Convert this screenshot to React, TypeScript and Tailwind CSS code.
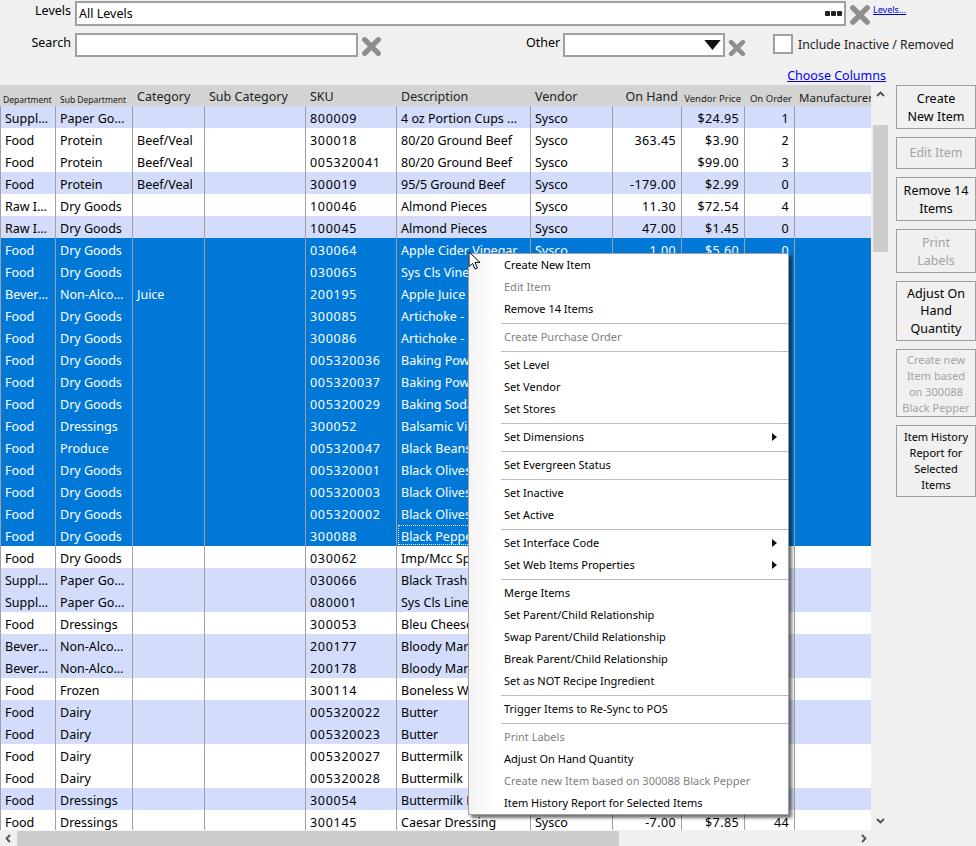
const rows: string[][] = [
  ["Supplies", "Paper Goods", "", "", "800009", "4 oz Portion Cups ...", "Sysco", "", "$24.95", "1"],
  ["Food", "Protein", "Beef/Veal", "", "300018", "80/20 Ground Beef", "Sysco", "363.45", "$3.90", "2"],
  ["Food", "Protein", "Beef/Veal", "", "005320041", "80/20 Ground Beef", "Sysco", "", "$99.00", "3"],
  ["Food", "Protein", "Beef/Veal", "", "300019", "95/5 Ground Beef", "Sysco", "-179.00", "$2.99", "0"],
  ["Raw Ingredients", "Dry Goods", "", "", "100046", "Almond Pieces", "Sysco", "11.30", "$72.54", "4"],
  ["Raw Ingredients", "Dry Goods", "", "", "100045", "Almond Pieces", "Sysco", "47.00", "$1.45", "0"],
  ["Food", "Dry Goods", "", "", "030064", "Apple Cider Vinegar", "Sysco", "1.00", "$5.60", "0"],
  ["Food", "Dry Goods", "", "", "030065", "Sys Cls Vinegar", "Sysco", "", "", ""],
  ["Beverages", "Non-Alcoholic", "Juice", "", "200195", "Apple Juice", "Sysco", "", "", ""],
  ["Food", "Dry Goods", "", "", "300085", "Artichoke - Hearts", "Sysco", "", "", ""],
  ["Food", "Dry Goods", "", "", "300086", "Artichoke - Quarters", "Sysco", "", "", ""],
  ["Food", "Dry Goods", "", "", "005320036", "Baking Powder", "Sysco", "", "", ""],
  ["Food", "Dry Goods", "", "", "005320037", "Baking Powder", "Sysco", "", "", ""],
  ["Food", "Dry Goods", "", "", "005320029", "Baking Soda", "Sysco", "", "", ""],
  ["Food", "Dressings", "", "", "300052", "Balsamic Vinegar", "Sysco", "", "", ""],
  ["Food", "Produce", "", "", "005320047", "Black Beans", "Sysco", "", "", ""],
  ["Food", "Dry Goods", "", "", "005320001", "Black Olives", "Sysco", "", "", ""],
  ["Food", "Dry Goods", "", "", "005320003", "Black Olives", "Sysco", "", "", ""],
  ["Food", "Dry Goods", "", "", "005320002", "Black Olives", "Sysco", "", "", ""],
  ["Food", "Dry Goods", "", "", "300088", "Black Pepper", "Sysco", "", "", ""],
  ["Food", "Dry Goods", "", "", "030062", "Imp/Mcc Spice", "Sysco", "", "", ""],
  ["Supplies", "Paper Goods", "", "", "030066", "Black Trash Bags", "Sysco", "", "", ""],
  ["Supplies", "Paper Goods", "", "", "080001", "Sys Cls Liners", "Sysco", "", "", ""],
  ["Food", "Dressings", "", "", "300053", "Bleu Cheese", "Sysco", "", "", ""],
  ["Beverages", "Non-Alcoholic", "", "", "200177", "Bloody Mary Mix", "Sysco", "", "", ""],
  ["Beverages", "Non-Alcoholic", "", "", "200178", "Bloody Mary Mix", "Sysco", "", "", ""],
  ["Food", "Frozen", "", "", "300114", "Boneless Wings", "Sysco", "", "", ""],
  ["Food", "Dairy", "", "", "005320022", "Butter", "Sysco", "", "", ""],
  ["Food", "Dairy", "", "", "005320023", "Butter", "Sysco", "", "", ""],
  ["Food", "Dairy", "", "", "005320027", "Buttermilk", "Sysco", "", "", ""],
  ["Food", "Dairy", "", "", "005320028", "Buttermilk", "Sysco", "", "", ""],
  ["Food", "Dressings", "", "", "300054", "Buttermilk Ranch", "Sysco", "", "", ""],
  ["Food", "Dressings", "", "", "300145", "Caesar Dressing", "Sysco", "-7.00", "$7.85", "44"],
];

const stripes = [0, 3, 5, 21, 22, 24, 25, 27, 28, 31];

const columns = [
  "w-[56px] border-l border-r pl-1 pr-1",
  "w-[77px] border-r pl-1 pr-0.5",
  "w-[72px] border-r pl-1 pr-1",
  "w-[101px] border-r pl-1 pr-1",
  "w-[91px] border-r pl-1 pr-1 tracking-[0.7px]",
  "w-[134px] border-r pl-1 pr-1",
  "w-[82px] border-r pl-1 pr-1",
  "w-[69px] border-r pr-[5px] text-right tracking-[0.4px]",
  "w-[63px] border-r pr-[5px] text-right tracking-[0.4px]",
  "w-[50px] border-r pr-[5px] text-right tracking-[0.4px]",
];

const menu: (string | null | { t: string; off?: boolean; sub?: boolean })[] = [
  "Create New Item",
  { t: "Edit Item", off: true },
  "Remove 14 Items",
  null,
  { t: "Create Purchase Order", off: true },
  null,
  "Set Level",
  "Set Vendor",
  "Set Stores",
  null,
  { t: "Set Dimensions", sub: true },
  null,
  "Set Evergreen Status",
  null,
  "Set Inactive",
  "Set Active",
  null,
  { t: "Set Interface Code", sub: true },
  { t: "Set Web Items Properties", sub: true },
  null,
  "Merge Items",
  "Set Parent/Child Relationship",
  "Swap Parent/Child Relationship",
  "Break Parent/Child Relationship",
  "Set as NOT Recipe Ingredient",
  null,
  "Trigger Items to Re-Sync to POS",
  null,
  { t: "Print Labels", off: true },
  "Adjust On Hand Quantity",
  { t: "Create new Item based on 300088 Black Pepper", off: true },
  "Item History Report for Selected Items",
];

const buttons = [
  { lines: ["Create", "New Item"], h: "h-[44px] pt-0.5 text-[12.5px] leading-[18px]" },
  { lines: ["Edit Item"], h: "h-[32px] text-[12.5px] leading-[18px] text-[#a3a3a3]" },
  { lines: ["Remove 14", "Items"], h: "h-[44px] pt-0.5 text-[12.5px] leading-[18px]" },
  { lines: ["Print", "Labels"], h: "h-[44px] pt-0.5 text-[12.5px] leading-[18px] text-[#a3a3a3]" },
  { lines: ["Adjust On", "Hand", "Quantity"], h: "h-[60px] text-[12.5px] leading-[17.5px]" },
  { lines: ["Create new", "Item based", "on 300088", "Black Pepper"], h: "h-[68px] pt-0.5 text-[11px] leading-[16px] text-[#a3a3a3]" },
  { lines: ["Item History", "Report for", "Selected", "Items"], h: "h-[72px] text-[11px] leading-[16px]" },
];

function XIcon({ size }: { size: number }) {
  return (
    <svg width={size} height={size} viewBox="0 0 20 20" className="shrink-0">
      <path d="M3.5 3.5 L16.5 16.5 M16.5 3.5 L3.5 16.5" stroke="#8e8e8e" strokeWidth="5" strokeLinecap="round" />
    </svg>
  );
}

function Chevron({ d }: { d: string }) {
  return (
    <svg width="9" height="9" viewBox="0 0 9 9" fill="none">
      <path d={d} stroke="#505050" strokeWidth="1.8" />
    </svg>
  );
}

function Row({ cells, index }: { cells: string[]; index: number }) {
  const selected = index >= 6 && index <= 19;
  const bg = selected
    ? "bg-[#0078d7] text-white"
    : stripes.includes(index)
      ? "bg-[#d3ddfb] text-black"
      : "bg-white text-black";
  return (
    <div className={`flex h-[22px] shrink-0 leading-[25px] ${bg}`}>
      {columns.map((col, i) => (
        <div key={i} className={`${col} h-[22px] shrink-0 truncate border-[#a0a0a0] ${index === 19 && i === 5 ? "outline-1 outline-dotted outline-white -outline-offset-2" : ""}`}>
          {cells[i]}
        </div>
      ))}
    </div>
  );
}

export default function App() {
  return (
    <div className="relative flex h-[846px] w-[976px] flex-col overflow-hidden bg-[#f0f0f0] font-['Noto_Sans',sans-serif] text-[12.5px] text-black">
      {/* Filters */}
      <div className="h-[85px] shrink-0">
        <div className="flex h-[33px] pt-px">
          <div className="mt-px w-[71px] text-right leading-[18px]">Levels</div>
          <div className="ml-1 flex h-[25px] w-[771px] items-center justify-between border-2 border-[#a0a0a0] bg-white pl-0.5 pr-0.5">
            <span className="pt-0.5">All Levels</span>
            <span className="flex gap-px">
              <i className="size-[5px] rounded-[1px] bg-[#222]" />
              <i className="size-[5px] rounded-[1px] bg-[#222]" />
              <i className="size-[5px] rounded-[1px] bg-[#222]" />
            </span>
          </div>
          <div className="ml-[3px] mt-[3px]"><XIcon size={22} /></div>
          <a className="ml-0.5 mt-[3px] h-3 text-[9px] leading-3 text-[#0000ee] underline">Levels...</a>
        </div>
        <div className="flex h-[24px]">
          <div className="mt-px w-[71px] text-right leading-[18px]">Search</div>
          <div className="ml-1 h-[24px] w-[283px] border-2 border-[#a0a0a0] bg-white" />
          <div className="ml-[3px] mt-[3px]"><XIcon size={21} /></div>
          <div className="ml-[144px] mt-px w-[34px] leading-[18px]">Other</div>
          <div className="ml-[3px] flex h-[24px] w-[162px] items-center justify-end border-2 border-[#a0a0a0] bg-white pr-0.5">
            <svg width="17" height="10" viewBox="0 0 18 11"><path d="M0 0 H18 L9 11 Z" fill="#111" /></svg>
          </div>
          <div className="ml-[3px] mt-[6px]"><XIcon size={18} /></div>
          <div className="ml-[27px] mt-px size-[20px] border-2 border-[#a0a0a0] bg-white" />
          <div className="ml-[5px] mt-[3px] text-[12.25px] leading-[18px] text-[#222]">Include Inactive / Removed</div>
        </div>
        <div className="mt-[10px] w-[886px] text-right leading-[18px]">
          <a className="text-[#0000ee] underline">Choose Columns</a>
        </div>
      </div>

      {/* Grid, scrollbars and action buttons */}
      <div className="flex h-[761px]">
        <div className="flex w-[871px] shrink-0 flex-col">
          <div className="h-[745px] overflow-hidden">
            <div className="flex h-[21px] items-center whitespace-nowrap bg-[#d3d3d3] pt-[3px] text-[#222]">
              <div className="w-[56px] shrink-0 pl-[3px] pt-[7px] text-[8.5px]">Department</div>
              <div className="w-[77px] shrink-0 pl-1 pt-1.5 text-[8.5px]">Sub Department</div>
              <div className="w-[72px] shrink-0 pl-1">Category</div>
              <div className="w-[101px] shrink-0 pl-1">Sub Category</div>
              <div className="w-[91px] shrink-0 pl-1">SKU</div>
              <div className="w-[134px] shrink-0 pl-1">Description</div>
              <div className="w-[82px] shrink-0 pl-1">Vendor</div>
              <div className="w-[69px] shrink-0 pr-1 text-right">On Hand</div>
              <div className="w-[63px] shrink-0 pr-1 pt-[5px] text-right text-[9.5px]">Vendor Price</div>
              <div className="w-[50px] shrink-0 pr-[3px] pt-[5px] text-right text-[9.5px]">On Order</div>
              <div className="w-[76px] shrink-0 overflow-hidden pl-1 pt-px text-[11.5px]">Manufacturer</div>
            </div>
            {rows.map((cells, i) => (
              <Row key={i} cells={cells} index={i} />
            ))}
          </div>
          <div className="flex h-[16px] items-center">
            <div className="flex w-[17px] shrink-0 justify-center"><Chevron d="M6 1 L2.5 4.5 L6 8" /></div>
            <div className="h-[15px] w-[602px] bg-[#cdcdcd]" />
            <div className="flex flex-1 justify-end pr-[3px]"><Chevron d="M3 1 L6.5 4.5 L3 8" /></div>
          </div>
        </div>

        <div className="flex h-[745px] w-[17px] shrink-0 flex-col items-center pl-px">
          <div className="flex h-[40px] shrink-0 justify-center pt-[5px]"><Chevron d="M1 6 L4.5 2.5 L8 6" /></div>
          <div className="h-[127px] w-[15px] shrink-0 bg-[#cdcdcd]" />
          <div className="flex-1" />
          <div className="flex justify-center pb-[5px]"><Chevron d="M1 3 L4.5 6.5 L8 3" /></div>
        </div>

        <div className="ml-2 flex w-[80px] shrink-0 flex-col gap-2">
          {buttons.map((b) => (
            <div key={b.lines.join(" ")} className={`flex shrink-0 flex-col items-center justify-center whitespace-nowrap border border-[#a0a0a0] bg-[#f0f0f0] text-center ${b.h}`}>
              {b.lines.map((l) => (
                <span key={l}>{l}</span>
              ))}
            </div>
          ))}
        </div>
      </div>

      {/* Context menu */}
      <div className="absolute left-[468px] top-[253px] flex w-[321px] flex-col border border-[#a0a0a0] bg-white text-[11px] shadow-[3px_3px_3px_rgba(0,0,0,0.55)]">
        <div className="absolute bottom-0 left-0 top-0 w-[26px] bg-gradient-to-r from-[#f4f4f4] to-white" />
        {menu.map((m, i) => {
          if (m === null) return <div key={i} className="relative my-[2.5px] ml-[32px] h-px bg-[#bcbcbc]" />;
          const item = typeof m === "string" ? { t: m } : m;
          return (
            <div key={i} className={`relative flex h-[22px] items-center justify-between pl-[35px] pr-[11px] ${"off" in item && item.off ? "text-[#808080]" : "text-black"}`}>
              <span>{item.t}</span>
              {"sub" in item && item.sub && (
                <svg width="5" height="8" viewBox="0 0 5 8"><path d="M0 0 L5 4 L0 8 Z" fill="#111" /></svg>
              )}
            </div>
          );
        })}
      </div>

      {/* Mouse pointer */}
      <svg className="absolute left-[468px] top-[251px]" width="14" height="20" viewBox="0 0 14 20">
        <path d="M1 1 V15.5 L4.6 12.4 L7 18 L9.4 17 L7 11.4 H12 Z" fill="white" stroke="black" strokeWidth="1" />
      </svg>
    </div>
  );
}
